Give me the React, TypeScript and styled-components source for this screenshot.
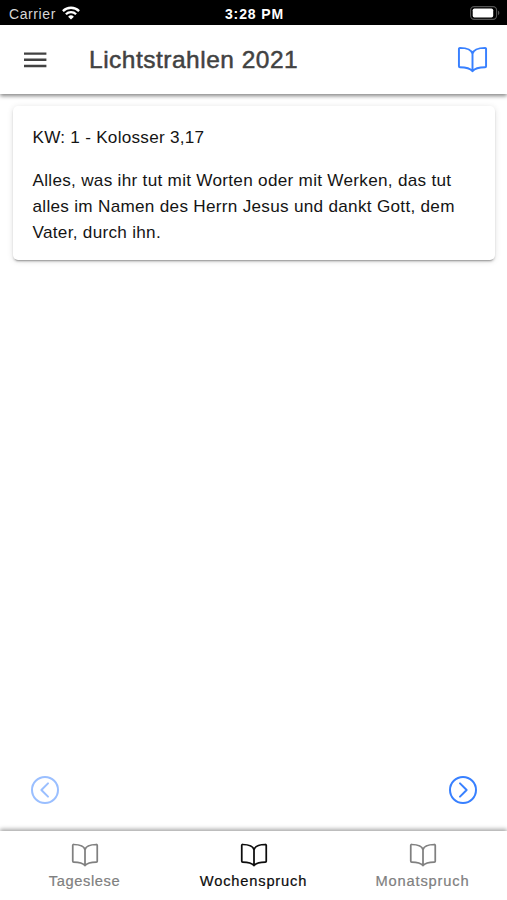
import React from "react";
import styled, { createGlobalStyle } from "styled-components";

const GlobalStyle = createGlobalStyle`
  *, *::before, *::after { box-sizing: border-box; }
  body {
    margin: 0;
    background: #fff;
    font-family: "Liberation Sans", Arial, Helvetica, sans-serif;
    overflow: hidden;
  }
`;

const Screen = styled.div`
  display: flex;
  flex-direction: column;
  width: 507px;
  height: 900px;
  background: #fff;
`;

const StatusBar = styled.div`
  display: grid;
  grid-template-columns: 1fr auto 1fr;
  align-items: center;
  flex: none;
  height: 25px;
  padding: 2px 7px 0 9px;
  background: #000;
  color: #fff;
`;

const Carrier = styled.div`
  display: flex;
  align-items: center;
  gap: 6px;
  font-size: 14px;
  letter-spacing: 0.6px;
  color: #d6d6d6;

  svg { margin-top: -2px; }
`;

const Clock = styled.div`
  font-size: 14px;
  font-weight: 700;
  letter-spacing: 0.9px;
`;

const BatterySlot = styled.div`
  display: flex;
  justify-content: flex-end;
  padding-bottom: 2px;
`;

const Toolbar = styled.header`
  display: flex;
  align-items: center;
  flex: none;
  height: 69px;
  padding: 0 19px 0 19px;
  background: #fff;
  z-index: 1;
  box-shadow: 0 2px 4px rgba(0, 0, 0, 0.48);
`;

const IconButton = styled.button<{ $color: string; $faded?: boolean }>`
  display: flex;
  padding: 0;
  border: 0;
  background: none;
  color: ${(p) => p.$color};
  opacity: ${(p) => (p.$faded ? 0.5 : 1)};
`;

const Title = styled.h1`
  flex: 1;
  margin: 0 0 0 38px;
  font-size: 24.5px;
  font-weight: 400;
  letter-spacing: 0.5px;
  line-height: 30px;
  color: #424242;
  -webkit-text-stroke: 0.5px #424242;
`;

const Content = styled.main`
  display: flex;
  flex-direction: column;
  justify-content: space-between;
  flex: 1;
  padding: 12px 12px 25px 13px;
`;

const Card = styled.article`
  height: 154px;
  padding: 18.6px 19.5px 0;
  border-radius: 5px;
  background: #fff;
  box-shadow: 0 3px 1px -2px rgba(0, 0, 0, 0.2), 0 2px 2px rgba(0, 0, 0, 0.14),
    0 1px 6px rgba(0, 0, 0, 0.12);
  color: #141414;
  font-size: 17.15px;
  line-height: 25.7px;
`;

const Reference = styled.p`
  margin: 0 0 18px;
  letter-spacing: 0.26px;
`;

const Verse = styled.p`
  margin: 0;
  letter-spacing: 0.29px;
  white-space: nowrap;
`;

const Pager = styled.nav`
  display: flex;
  justify-content: space-between;
  padding: 0 16px;
`;

const TabBar = styled.nav`
  display: grid;
  grid-template-columns: repeat(3, 1fr);
  flex: none;
  height: 69px;
  background: #fff;
  box-shadow: 0 -2px 4px rgba(0, 0, 0, 0.34);
`;

const Tab = styled.div<{ $active?: boolean }>`
  display: flex;
  flex-direction: column;
  align-items: center;
  padding-top: 9.5px;
  gap: 2px;
  color: ${(p) => (p.$active ? "#0c0c0c" : "#808080")};
`;

const TabLabel = styled.span<{ $spacing: number }>`
  font-size: 14.7px;
  line-height: 20px;
  letter-spacing: ${(p) => p.$spacing}px;
  -webkit-text-stroke: 0.2px currentColor;
`;

const BookIcon = ({ size }: { size: number }) => (
  <svg width={size} height={size} viewBox="0 0 512 512" fill="none" stroke="currentColor" strokeWidth="32" strokeLinecap="round" strokeLinejoin="round">
    <path d="M256 160c16-63.16 76.43-95.41 208-96a15.94 15.94 0 0116 16v288a16 16 0 01-16 16c-128 0-177.45 25.81-208 64-30.37-38-80-64-208-64-9.88 0-16-8.05-16-17.93V80a15.94 15.94 0 0116-16c131.57.59 192 32.84 208 96zM256 160v288" />
  </svg>
);

const MenuIcon = () => (
  <svg width="32" height="32" viewBox="0 0 32 32" fill="none" stroke="#424242" strokeWidth="2.4">
    <path d="M5 9.6h22.4M5 15.8h22.4M5 22h22.4" />
  </svg>
);

const CircleArrow = ({ back }: { back?: boolean }) => (
  <svg width="32" height="32" viewBox="0 0 512 512" fill="none" stroke="currentColor" strokeWidth="32">
    <circle cx="256" cy="256" r="208" strokeMiterlimit="10" />
    <path d={back ? "M304 362l-106-106 106-106" : "M208 362l106-106-106-106"} strokeLinecap="round" strokeLinejoin="round" />
  </svg>
);

const WifiIcon = () => (
  <svg width="18" height="14" viewBox="0 0 18 14" fill="none" stroke="#fff" strokeWidth="2.3">
    <path d="M.9 5.1a11.5 11.5 0 0116.2 0M3.9 8.2a7.2 7.2 0 0110.2 0" />
    <path d="M9 13.6L6.1 10.7a4.1 4.1 0 015.8 0z" fill="#fff" stroke="none" />
  </svg>
);

const BatteryIcon = () => (
  <svg width="30" height="14" viewBox="0 0 30 14">
    <rect x=".6" y=".6" width="26" height="12.8" rx="3.6" fill="none" stroke="#555" strokeWidth="1.1" />
    <rect x="2.7" y="2.5" width="20.5" height="9" rx="1.7" fill="#fff" />
    <path d="M28 4.8v4.4c1.8-.6 1.8-3.8 0-4.4z" fill="#555" />
  </svg>
);

const tabs = [
  { label: "Tageslese", spacing: 0.6 },
  { label: "Wochenspruch", spacing: 0.8, active: true },
  { label: "Monatspruch", spacing: 0.83 },
];

export default function App() {
  return (
    <>
      <GlobalStyle />
      <Screen>
        <StatusBar>
          <Carrier>Carrier <WifiIcon /></Carrier>
          <Clock>3:28 PM</Clock>
          <BatterySlot><BatteryIcon /></BatterySlot>
        </StatusBar>
        <Toolbar>
          <IconButton $color="#424242" aria-label="Menü"><MenuIcon /></IconButton>
          <Title>Lichtstrahlen 2021</Title>
          <IconButton $color="#3880ff" aria-label="Bibel"><BookIcon size={31} /></IconButton>
        </Toolbar>
        <Content>
          <Card>
            <Reference>KW: 1 - Kolosser 3,17</Reference>
            <Verse>
              Alles, was ihr tut mit Worten oder mit Werken, das tut<br />
              alles im Namen des Herrn Jesus und dankt Gott, dem<br />
              Vater, durch ihn.
            </Verse>
          </Card>
          <Pager>
            <IconButton $color="#3880ff" $faded aria-label="Zurück"><CircleArrow back /></IconButton>
            <IconButton $color="#3880ff" aria-label="Weiter"><CircleArrow /></IconButton>
          </Pager>
        </Content>
        <TabBar>
          {tabs.map((t) => (
            <Tab key={t.label} $active={t.active}>
              <BookIcon size={28} />
              <TabLabel $spacing={t.spacing}>{t.label}</TabLabel>
            </Tab>
          ))}
        </TabBar>
      </Screen>
    </>
  );
}
